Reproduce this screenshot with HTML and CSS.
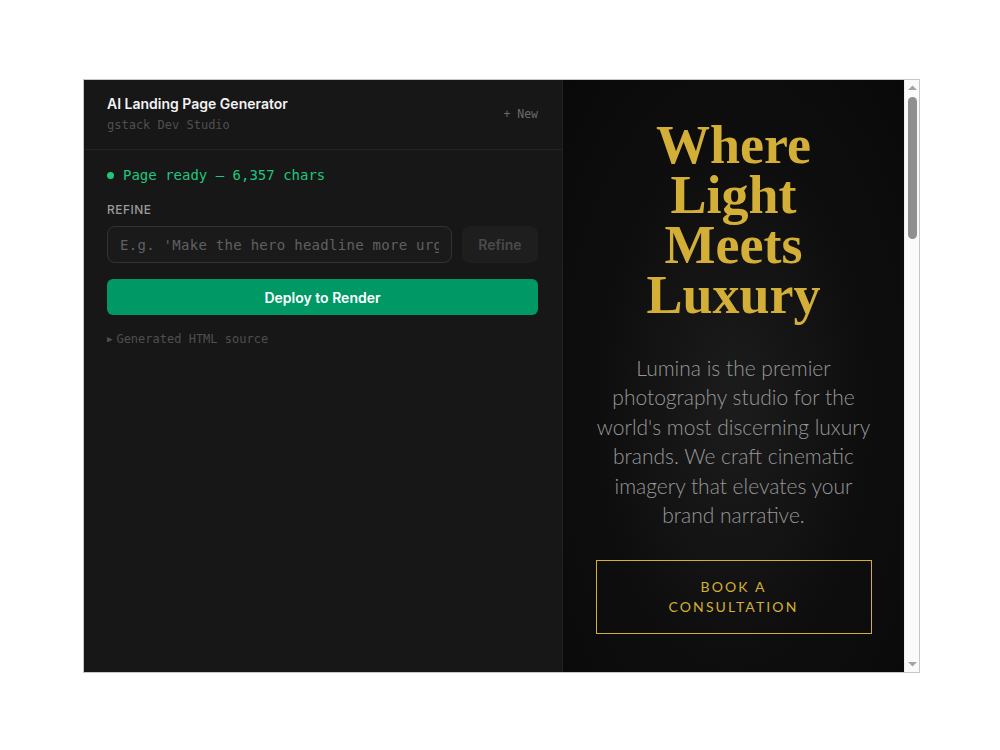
FILE: index.html
```html
<!DOCTYPE html>
<html lang="en">
<head>
    <meta charset="UTF-8">
    <meta name="viewport" content="width=device-width, initial-scale=1.0">
    <title>AI Landing Page Generator</title>
    <link rel="stylesheet" href="styles.css">
</head>
<body>
    <div class="frame">
        <aside class="panel">
            <header class="panel-header">
                <div>
                    <div class="title">AI Landing Page Generator</div>
                    <div class="subtitle">gstack Dev Studio</div>
                </div>
                <button class="new-btn">+ New</button>
            </header>
            <div class="panel-body">
                <div class="status"><span class="dot"></span>Page ready — 6,357 chars</div>
                <label class="label" for="refine">REFINE</label>
                <div class="refine-row">
                    <input type="text" id="refine" placeholder="E.g. 'Make the hero headline more urgent'">
                    <button class="refine-btn" disabled>Refine</button>
                </div>
                <button class="deploy-btn">Deploy to Render</button>
                <details class="source">
                    <summary>Generated HTML source</summary>
                </details>
            </div>
        </aside>
        <div class="preview">
            <div class="preview-page">
                <section class="hero">
                    <h1>Where Light Meets Luxury</h1>
                    <p>Lumina is the premier photography studio for the world's most discerning luxury brands. We craft cinematic imagery that elevates your brand narrative.</p>
                    <a class="cta" href="#">BOOK A CONSULTATION</a>
                </section>
            </div>
            <div class="scrollbar">
                <svg class="arrow" width="15" height="15" viewBox="0 0 15 15"><path d="M3 10L7.5 5.5L12 10z" fill="#a3a3a3"/></svg>
                <div class="track">
                    <div class="thumb"></div>
                </div>
                <svg class="arrow" width="15" height="15" viewBox="0 0 15 15"><path d="M3 5H12L7.5 9.5z" fill="#a3a3a3"/></svg>
            </div>
        </div>
    </div>
</body>
</html>
```

FILE: styles.css
```css
body {
    margin: 0;
    background: #fff;
    font-family: Inter, "Liberation Sans", sans-serif;
}
.frame {
    display: flex;
    width: 835px;
    height: 592px;
    margin: 79px 0 0 83px;
    border: 1px solid #c6c6c6;
    background: #171717;
}
.panel {
    width: 478px;
    border-right: 1px solid #222;
    background: #171717;
    flex-shrink: 0;
}
.panel-header {
    display: flex;
    justify-content: space-between;
    align-items: center;
    padding: 14px 24px 16px 23px;
    border-bottom: 1px solid #232323;
}
.title {
    color: #f2f2f2;
    font-size: 14px;
    font-weight: 600;
    line-height: 20px;
}
.subtitle {
    margin-top: 3px;
    color: #4f4f4f;
    font-family: "DejaVu Sans Mono", monospace;
    font-size: 12px;
    line-height: 16px;
}
.new-btn {
    background: none;
    border: none;
    padding: 0;
    color: #6b6b6b;
    font-family: "DejaVu Sans Mono", monospace;
    font-size: 11.5px;
}
.panel-body {
    padding: 15px 24px 0 23px;
}
.status {
    display: flex;
    align-items: center;
    color: #1fc77e;
    font-family: "DejaVu Sans Mono", monospace;
    font-size: 14px;
    line-height: 20px;
}
.dot {
    width: 7px;
    height: 7px;
    border-radius: 50%;
    background: #1fc77e;
    margin-right: 9px;
}
.label {
    display: block;
    margin: 17px 0 8px;
    color: #9a9a9a;
    font-size: 12px;
    font-weight: 500;
    letter-spacing: 0.04em;
    line-height: 16px;
}
.refine-row {
    display: flex;
    gap: 10px;
}
.refine-row input {
    flex: 1;
    min-width: 0;
    height: 37px;
    box-sizing: border-box;
    padding: 0 12px;
    background: #1a1a1a;
    border: 1px solid #333;
    border-radius: 8px;
    color: #ddd;
    font-family: "DejaVu Sans Mono", monospace;
    font-size: 14px;
    letter-spacing: 0.02em;
}
.refine-row input::placeholder {
    color: #606060;
}
.refine-btn {
    width: 76px;
    height: 37px;
    background: #1e1e1e;
    border: 1px solid #1f1f1f;
    border-radius: 8px;
    color: #4a4a4a;
    font-family: Inter, sans-serif;
    font-size: 14px;
    font-weight: 600;
}
.deploy-btn {
    display: block;
    width: 100%;
    height: 36px;
    margin-top: 16px;
    background: #009966;
    border: none;
    border-radius: 6px;
    color: #fff;
    font-family: Inter, sans-serif;
    font-size: 14px;
    font-weight: 600;
}
.source {
    margin-top: 16px;
    color: #4f4f4f;
    font-family: "DejaVu Sans Mono", monospace;
    font-size: 12px;
    line-height: 16px;
}
.source summary {
    list-style: none;
}
.source summary::before {
    content: "▶";
    font-size: 9px;
    margin-right: 4px;
    vertical-align: 1px;
}
.preview {
    flex: 1;
    display: flex;
    min-width: 0;
    background: #0a0a0a;
}
.preview-page {
    flex: 1;
    overflow: hidden;
}
.scrollbar {
    width: 15px;
    display: flex;
    flex-direction: column;
    background: #fafafa;
    border-left: 1px solid #ededed;
    box-sizing: border-box;
}
.arrow {
    display: block;
    flex-shrink: 0;
}
.track {
    flex: 1;
    padding: 2px 2px 0 3px;
}
.thumb {
    height: 142px;
    border-radius: 5px;
    background: #8f8f8f;
}
.hero {
    min-height: 100%;
    box-sizing: border-box;
    padding: 40px 20px 40px;
    text-align: center;
    background: radial-gradient(ellipse at 50% 55%, #1c1c1c 0%, #0e0e0e 55%, #090909 100%);
}
.hero h1 {
    max-width: 250px;
    margin: 0 auto;
    color: #d4af37;
    font-family: "Liberation Serif", serif;
    font-size: 54px;
    font-weight: 700;
    line-height: 50px;
}
.hero p {
    margin: 33px auto 31px;
    max-width: 286px;
    color: #979797;
    font-family: Lato, sans-serif;
    font-size: 21px;
    font-weight: 300;
    line-height: 29.4px;
}
.cta {
    display: block;
    width: 158px;
    margin: 0 auto;
    padding: 16px 58px;
    border: 1px solid #d4af37;
    color: #d4af37;
    font-family: Lato, sans-serif;
    font-size: 14px;
    letter-spacing: 0.15em;
    line-height: 20px;
    text-decoration: none;
}
```
